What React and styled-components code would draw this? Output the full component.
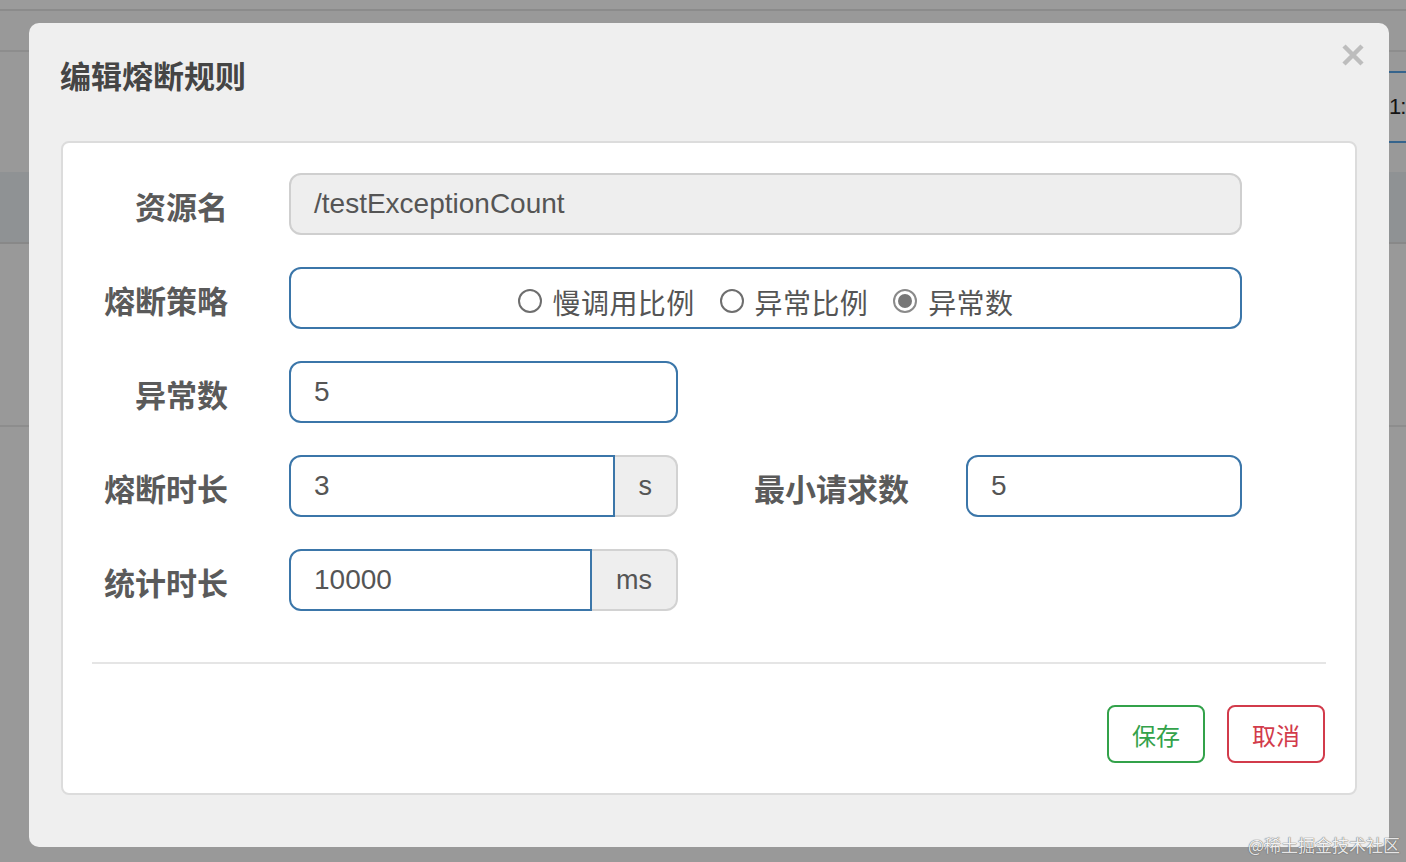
import styled, { createGlobalStyle } from "styled-components";

const GlobalStyle = createGlobalStyle`
  html, body {
    margin: 0;
    padding: 0;
  }
  body {
    background: #999;
    font-family: "Liberation Sans", "Noto Sans CJK SC", sans-serif;
    overflow: hidden;
  }
`;

const CJK = `"Noto Sans CJK SC", "Liberation Sans", sans-serif`;

// the page underneath the dimmed backdrop
const Page = styled.div`
  position: relative;
  width: 1406px;
  height: 862px;
  display: flex;
  flex-direction: column;
  background: #999;
  overflow: hidden;
`;
const TopStrip = styled.div`
  height: 9px;
  background: #9b9b9b;
  border-bottom: 2px solid #8b8b8b;
`;
const NavRow = styled.div`
  height: 39px;
  border-bottom: 2px solid #8d8d8d;
`;
const ToolRow = styled.div`
  height: 120px;
  display: flex;
  justify-content: flex-end;
  align-items: flex-start;
  padding-top: 19px;
  box-sizing: border-box;
`;
const PeekInput = styled.div`
  width: 17px;
  height: 72px;
  box-sizing: border-box;
  border-top: 2px solid #36648c;
  border-bottom: 2px solid #36648c;
  background: #9c9c9c;
  white-space: nowrap;
  font-size: 22px;
  letter-spacing: -1px;
  line-height: 68px;
  color: #151515;
`;
const HeadBand = styled.div`
  height: 70px;
  background: #8f9294;
  border-bottom: 2px solid #888;
`;
const BodyBand = styled.div`
  height: 181px;
  border-bottom: 2px solid #8d8d8d;
`;

// modal
const Modal = styled.div`
  position: absolute;
  left: 29px;
  top: 23px;
  width: 1360px;
  height: 824px;
  box-sizing: border-box;
  background: #efefef;
  border-radius: 10px;
  display: flex;
  flex-direction: column;
  padding: 0 32px 52px;
`;
const Header = styled.div`
  height: 118px;
  flex: none;
  display: flex;
  justify-content: space-between;
  align-items: flex-start;
  padding-top: 21px;
  box-sizing: border-box;
  margin-right: -7px;
`;
const Title = styled.h4`
  margin: 13px 0 0 -1px;
  font-family: ${CJK};
  font-size: 31px;
  line-height: 36px;
  font-weight: 700;
  color: #454545;
`;
const CloseBtn = styled.button`
  width: 22px;
  height: 22px;
  padding: 0;
  border: none;
  background: none;
  cursor: pointer;
  display: flex;
`;
const Panel = styled.div`
  flex: 1;
  background: #fff;
  border: 2px solid #dcdcdc;
  border-radius: 8px;
  padding-top: 30px;
  display: flex;
  flex-direction: column;
`;
const Form = styled.div`
  display: flex;
  flex-direction: column;
  gap: 32px;
`;
const Row = styled.div`
  display: flex;
  align-items: center;
  height: 62px;
`;
const Label = styled.label`
  width: ${(p) => p.w || 165}px;
  margin-right: ${(p) => p.gap || 61}px;
  flex: none;
  text-align: right;
  padding-top: 3px;
  font-family: ${CJK};
  font-size: 31px;
  font-weight: 700;
  color: #5a5a5a;
`;
const Input = styled.div`
  width: ${(p) => (p.w ? `${p.w}px` : "auto")};
  flex: ${(p) => (p.w ? "none" : "1")};
  height: 62px;
  box-sizing: border-box;
  border: 2px solid ${(p) => (p.disabled ? "#cfcfcf" : "#3b76a9")};
  background: ${(p) => (p.disabled ? "#eee" : "#fff")};
  border-radius: ${(p) => (p.grouped ? "12px 0 0 12px" : "12px")};
  padding-left: 23px;
  display: flex;
  align-items: center;
  font-size: 28px;
  color: #555;
`;
const Group = styled.div`
  width: 389px;
  flex: none;
  display: flex;
`;
const Addon = styled.span`
  height: 62px;
  box-sizing: border-box;
  padding: 0 24px;
  border: 2px solid #d2d2d2;
  border-left: none;
  border-radius: 0 12px 12px 0;
  background: #eee;
  display: flex;
  align-items: center;
  font-size: 27px;
  color: #555;
`;
const RadioBox = styled.div`
  width: 953px;
  height: 62px;
  box-sizing: border-box;
  border: 2px solid #3b76a9;
  border-radius: 12px;
  padding-top: 8px;
  display: flex;
  justify-content: center;
  align-items: center;
  gap: 25px;
`;
const RadioItem = styled.label`
  display: flex;
  align-items: center;
  gap: 11px;
  font-family: ${CJK};
  font-size: 28px;
  letter-spacing: 0.4px;
  color: #555;
`;
const Dot = styled.span`
  width: 24px;
  height: 24px;
  box-sizing: border-box;
  border-radius: 50%;
  border: 2px solid ${(p) => (p.on ? "#8a8a8a" : "#6e6e6e")};
  background: #fff;
  display: flex;
  align-items: center;
  justify-content: center;
  margin-top: -3px;
  &::after {
    content: "";
    width: 14px;
    height: 14px;
    border-radius: 50%;
    background: ${(p) => (p.on ? "#777" : "transparent")};
  }
`;
const Divider = styled.div`
  height: 2px;
  background: #e5e5e5;
  margin: 51px 29px 0;
`;
const Footer = styled.div`
  display: flex;
  justify-content: flex-end;
  gap: 22px;
  padding: 41px 30px 0 0;
`;
const Button = styled.button`
  width: 98px;
  height: 58px;
  box-sizing: border-box;
  border: 2px solid ${(p) => p.color};
  border-radius: 8px;
  background: #fff;
  color: ${(p) => p.color};
  font-family: ${CJK};
  font-size: 24px;
  padding: 0;
  cursor: pointer;
`;
const Watermark = styled.div`
  position: absolute;
  right: 6px;
  bottom: 5px;
  font-family: ${CJK};
  font-size: 17px;
  color: #f3f3f3;
  text-shadow: 0 0 1px #555, 0 0 1px #555;
  opacity: 0.85;
`;

const strategies = [
  { text: "慢调用比例", on: false },
  { text: "异常比例", on: false },
  { text: "异常数", on: true },
];

export default function App() {
  return (
    <Page>
      <GlobalStyle />
      <TopStrip />
      <NavRow />
      <ToolRow>
        <PeekInput>1:</PeekInput>
      </ToolRow>
      <HeadBand />
      <BodyBand />

      <Modal>
        <Header>
          <Title>编辑熔断规则</Title>
          <CloseBtn aria-label="关闭">
            <svg width="22" height="22" viewBox="0 0 22 22">
              <path
                d="M2 2 L20 20 M20 2 L2 20"
                stroke="#bdbdbd"
                strokeWidth="4.5"
                strokeLinecap="butt"
              />
            </svg>
          </CloseBtn>
        </Header>
        <Panel>
          <Form>
            <Row>
              <Label>资源名</Label>
              <Input w={953} disabled>
                /testExceptionCount
              </Input>
            </Row>
            <Row>
              <Label>熔断策略</Label>
              <RadioBox>
                {strategies.map((s) => (
                  <RadioItem key={s.text}>
                    <Dot on={s.on ? 1 : 0} />
                    {s.text}
                  </RadioItem>
                ))}
              </RadioBox>
            </Row>
            <Row>
              <Label>异常数</Label>
              <Input w={389}>5</Input>
            </Row>
            <Row>
              <Label>熔断时长</Label>
              <Group>
                <Input grouped>3</Input>
                <Addon>s</Addon>
              </Group>
              <Label w={231} gap={57}>
                最小请求数
              </Label>
              <Input w={276}>5</Input>
            </Row>
            <Row>
              <Label>统计时长</Label>
              <Group>
                <Input grouped>10000</Input>
                <Addon>ms</Addon>
              </Group>
            </Row>
          </Form>
          <Divider />
          <Footer>
            <Button color="#33a24a">保存</Button>
            <Button color="#d23b4b">取消</Button>
          </Footer>
        </Panel>
      </Modal>
      <Watermark>@稀土掘金技术社区</Watermark>
    </Page>
  );
}
